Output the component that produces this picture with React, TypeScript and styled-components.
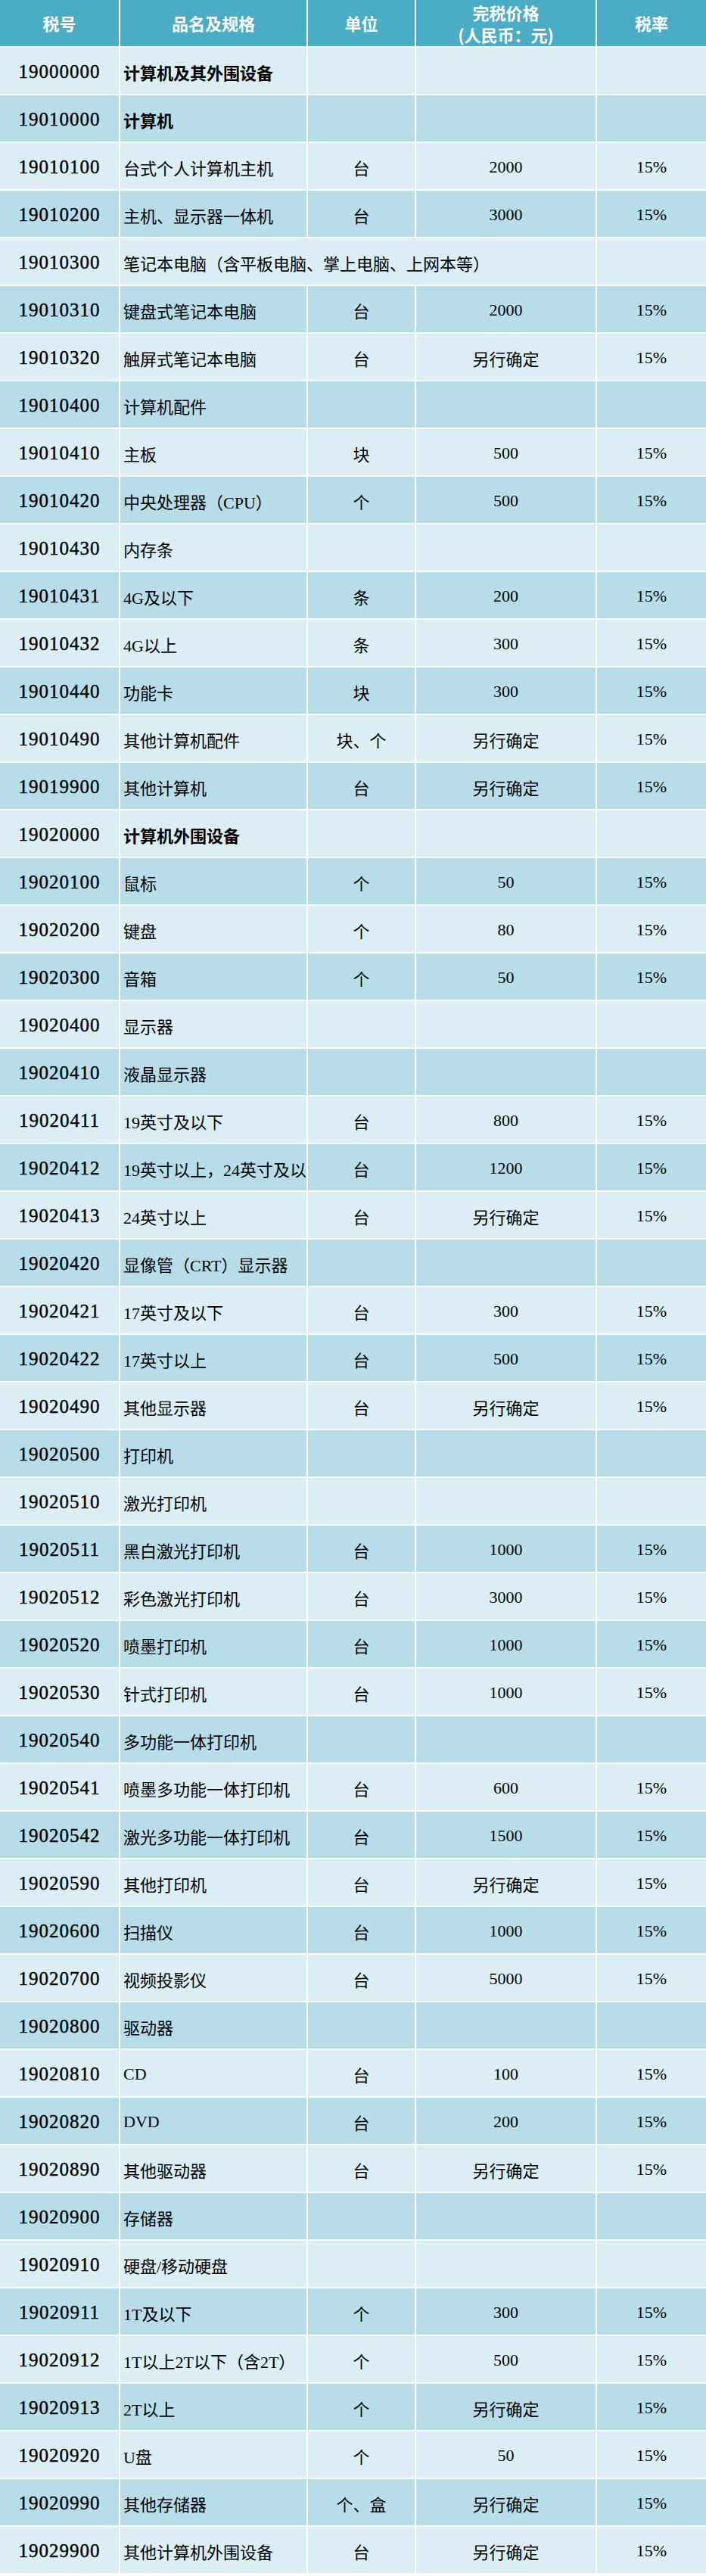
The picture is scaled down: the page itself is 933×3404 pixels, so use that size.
import React from 'react';
import styled, { createGlobalStyle } from 'styled-components';

const GlobalStyle = createGlobalStyle`
  html, body {
    margin: 0;
    padding: 0;
    background: #ffffff;
  }
  body {
    font-family: "Liberation Serif", "Noto Sans CJK SC", serif;
  }
`;

const HEADER_BG = '#4BACC6';
const LIGHT_BG = '#DAEEF3';
const DARK_BG = '#B7DDE8';

const Grid = styled.div`
  display: grid;
  grid-template-columns: 157px 246px 141px 237px 1fr;
  grid-auto-rows: 61px;
  gap: 2px;
  width: 933px;
  background: #ffffff;
  padding-bottom: 2px;
`;

const HeadCell = styled.div`
  display: flex;
  flex-direction: column;
  align-items: center;
  justify-content: center;
  background: ${HEADER_BG};
  color: #ffffff;
  font-family: "Noto Sans CJK SC", "Noto Sans", sans-serif;
  font-weight: 700;
  font-size: 22px;
  line-height: 29px;
  text-align: center;
`;

const Cell = styled.div<{ $dark: boolean; $align?: 'left' | 'center'; $span?: number; $bold?: boolean }>`
  display: flex;
  align-items: center;
  justify-content: ${(p) => (p.$align === 'left' ? 'flex-start' : 'center')};
  padding: 3px 0 0 ${(p) => (p.$align === 'left' ? '4px' : '0')};
  background: ${(p) => (p.$dark ? DARK_BG : LIGHT_BG)};
  color: #000000;
  font-size: 22px;
  font-weight: ${(p) => (p.$bold ? 700 : 400)};
  white-space: nowrap;
  overflow: hidden;
  grid-column: ${(p) => (p.$span ? `span ${p.$span}` : 'auto')};
`;

// tax codes are set larger and a touch heavier than the other columns
const CodeCell = styled(Cell)`
  font-size: 25px;
  letter-spacing: 1px;
  -webkit-text-stroke: 0.4px #000000;
`;

type Row = {
  code: string;
  name: string;
  unit?: string;
  price?: string;
  rate?: string;
  bold?: boolean;
  span?: boolean;
};

const item = (code: string, name: string, unit: string, price: string): Row => ({
  code,
  name,
  unit,
  price,
  rate: '15%',
});

const group = (code: string, name: string, bold = false): Row => ({ code, name, bold });

const rows: Row[] = [
  group('19000000', '计算机及其外围设备', true),
  group('19010000', '计算机', true),
  item('19010100', '台式个人计算机主机', '台', '2000'),
  item('19010200', '主机、显示器一体机', '台', '3000'),
  { code: '19010300', name: '笔记本电脑（含平板电脑、掌上电脑、上网本等）', span: true },
  item('19010310', '键盘式笔记本电脑', '台', '2000'),
  item('19010320', '触屏式笔记本电脑', '台', '另行确定'),
  group('19010400', '计算机配件'),
  item('19010410', '主板', '块', '500'),
  item('19010420', '中央处理器（CPU）', '个', '500'),
  group('19010430', '内存条'),
  item('19010431', '4G及以下', '条', '200'),
  item('19010432', '4G以上', '条', '300'),
  item('19010440', '功能卡', '块', '300'),
  item('19010490', '其他计算机配件', '块、个', '另行确定'),
  item('19019900', '其他计算机', '台', '另行确定'),
  group('19020000', '计算机外围设备', true),
  item('19020100', '鼠标', '个', '50'),
  item('19020200', '键盘', '个', '80'),
  item('19020300', '音箱', '个', '50'),
  group('19020400', '显示器'),
  group('19020410', '液晶显示器'),
  item('19020411', '19英寸及以下', '台', '800'),
  item('19020412', '19英寸以上，24英寸及以下', '台', '1200'),
  item('19020413', '24英寸以上', '台', '另行确定'),
  group('19020420', '显像管（CRT）显示器'),
  item('19020421', '17英寸及以下', '台', '300'),
  item('19020422', '17英寸以上', '台', '500'),
  item('19020490', '其他显示器', '台', '另行确定'),
  group('19020500', '打印机'),
  group('19020510', '激光打印机'),
  item('19020511', '黑白激光打印机', '台', '1000'),
  item('19020512', '彩色激光打印机', '台', '3000'),
  item('19020520', '喷墨打印机', '台', '1000'),
  item('19020530', '针式打印机', '台', '1000'),
  group('19020540', '多功能一体打印机'),
  item('19020541', '喷墨多功能一体打印机', '台', '600'),
  item('19020542', '激光多功能一体打印机', '台', '1500'),
  item('19020590', '其他打印机', '台', '另行确定'),
  item('19020600', '扫描仪', '台', '1000'),
  item('19020700', '视频投影仪', '台', '5000'),
  group('19020800', '驱动器'),
  item('19020810', 'CD', '台', '100'),
  item('19020820', 'DVD', '台', '200'),
  item('19020890', '其他驱动器', '台', '另行确定'),
  group('19020900', '存储器'),
  group('19020910', '硬盘/移动硬盘'),
  item('19020911', '1T及以下', '个', '300'),
  item('19020912', '1T以上2T以下（含2T）', '个', '500'),
  item('19020913', '2T以上', '个', '另行确定'),
  item('19020920', 'U盘', '个', '50'),
  item('19020990', '其他存储器', '个、盒', '另行确定'),
  item('19029900', '其他计算机外围设备', '台', '另行确定'),
];

export default function App() {
  return (
    <>
      <GlobalStyle />
      <Grid>
        <HeadCell>税号</HeadCell>
        <HeadCell>品名及规格</HeadCell>
        <HeadCell>单位</HeadCell>
        <HeadCell>
          <span>完税价格</span>
          <span>(人民币：元)</span>
        </HeadCell>
        <HeadCell>税率</HeadCell>
        {rows.map((r, i) => {
          const dark = i % 2 === 1;
          return (
            <React.Fragment key={r.code}>
              <CodeCell $dark={dark}>{r.code}</CodeCell>
              {r.span ? (
                <Cell $dark={dark} $align="left" $span={3}>
                  {r.name}
                </Cell>
              ) : (
                <>
                  <Cell $dark={dark} $align="left" $bold={r.bold}>
                    {r.name}
                  </Cell>
                  <Cell $dark={dark}>{r.unit}</Cell>
                  <Cell $dark={dark}>{r.price}</Cell>
                </>
              )}
              <Cell $dark={dark}>{r.rate}</Cell>
            </React.Fragment>
          );
        })}
      </Grid>
    </>
  );
}
